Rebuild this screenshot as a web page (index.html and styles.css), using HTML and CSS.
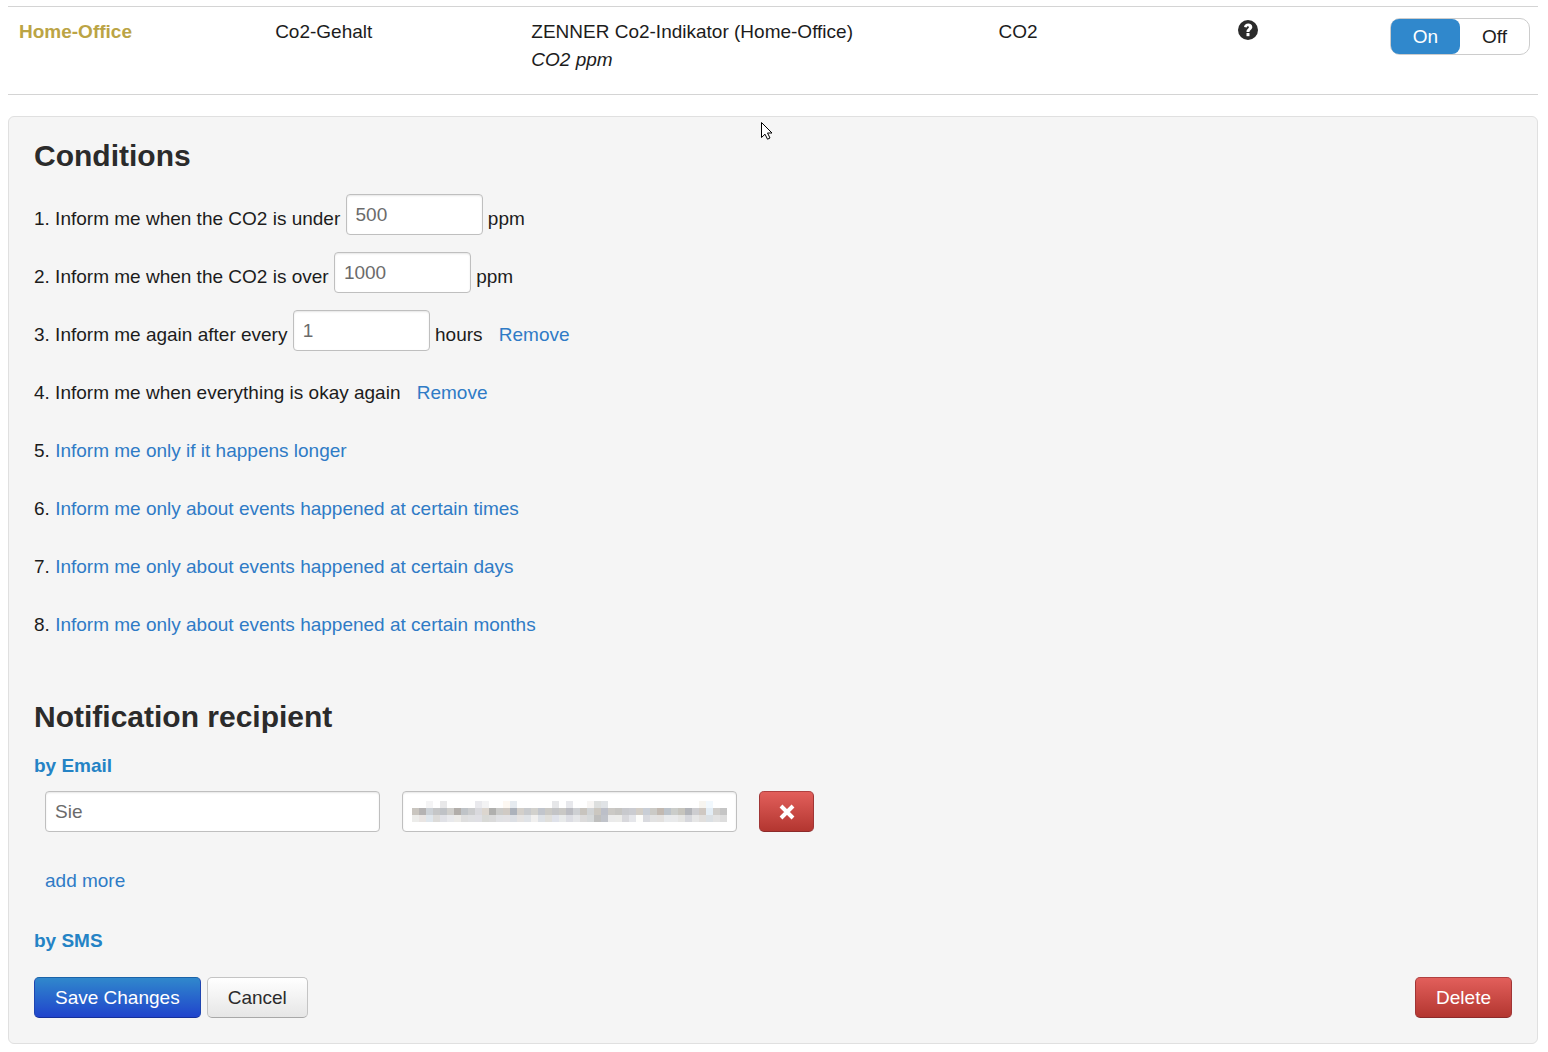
FILE: index.html
```html
<!DOCTYPE html>
<html lang="en">
<head>
    <meta charset="UTF-8">
    <meta name="viewport" content="width=device-width, initial-scale=1.0">
    <title>Notifications</title>
    <link rel="stylesheet" href="styles.css">
</head>
<body>
    <table class="sensor-table">
        <tr>
            <td class="col-group"><strong class="group-name">Home-Office</strong></td>
            <td class="col-name">Co2-Gehalt</td>
            <td class="col-device">ZENNER Co2-Indikator (Home-Office)<br><em>CO2 ppm</em></td>
            <td class="col-type">CO2</td>
            <td class="col-help">
                <svg class="help-icon" width="20" height="20" viewBox="0 0 20 20" role="img" aria-label="Help">
                    <circle cx="10" cy="10" r="10" fill="#2b2b2b"/>
                    <path d="M6 7C6.3 4.700 7.900 3.500 10.200 3.500c2.400 0 4.100 1.300 4.100 3.400 0 2.700-2.800 2.800-2.800 5H8.500c0-3.100 2.400-3.400 2.400-4.700 0-.6-.4-.9-.9-.9-.7 0-1.100.5-1.300 1.200z" fill="#fff"/>
                    <rect x="8.500" y="13" width="3" height="3.200" fill="#fff"/>
                </svg>
            </td>
            <td class="col-state">
                <div class="toggle">
                    <button type="button" class="toggle-btn active">On</button>
                    <button type="button" class="toggle-btn">Off</button>
                </div>
            </td>
        </tr>
    </table>

    <form class="well">
        <h3>Conditions</h3>
        <ul class="conditions">
            <li><label for="under">1. Inform me when the CO2 is under</label> <input type="text" id="under" class="input-small" value="500"> ppm</li>
            <li><label for="over">2. Inform me when the CO2 is over</label> <input type="text" id="over" class="input-small" value="1000"> ppm</li>
            <li><label for="again">3. Inform me again after every</label> <input type="text" id="again" class="input-small" value="1"> hours <a class="remove" href="#">Remove</a></li>
            <li>4. Inform me when everything is okay again <a class="remove" href="#">Remove</a></li>
            <li>5. <a href="#">Inform me only if it happens longer</a></li>
            <li>6. <a href="#">Inform me only about events happened at certain times</a></li>
            <li>7. <a href="#">Inform me only about events happened at certain days</a></li>
            <li>8. <a href="#">Inform me only about events happened at certain months</a></li>
        </ul>

        <h3>Notification recipient</h3>
        <h4 class="by-email">by Email</h4>
        <div class="recipient">
            <input type="text" class="input-large" value="Sie" aria-label="Name">
            <div class="masked">
                <input type="text" class="input-large" aria-label="Email">
                <svg id="mosaic" class="mosaic" width="315" height="21" shape-rendering="crispEdges" aria-hidden="true"></svg>
            </div>
            <button type="button" class="btn btn-danger btn-icon" aria-label="Remove recipient">
                <svg width="16" height="16" viewBox="0 0 16 16"><path d="M2 2l12 12M14 2L2 14" stroke="#fff" stroke-width="4"/></svg>
            </button>
        </div>
        <a class="add-more" href="#">add more</a>
        <h4>by SMS</h4>

        <div class="actions">
            <button type="button" class="btn btn-primary">Save Changes</button>
            <button type="button" class="btn">Cancel</button>
            <button type="button" class="btn btn-danger btn-delete">Delete</button>
        </div>
    </form>

    <svg class="cursor" width="14" height="20" viewBox="0 0 14 20" aria-hidden="true">
        <path d="M1.500 1.500v15l3.500-3.300 2.500 5 2.500-1.200-2.500-5h4.500z" fill="#fff" stroke="#000"/>
    </svg>

    <script src="mosaic.js"></script>
</body>
</html>
```

FILE: styles.css
```css
body {
    margin: 0;
    padding: 6px 10px 8px 8px;
    background-color: #fff;
    font-family: "Liberation Sans", Arial, sans-serif;
    font-size: 19px;
    line-height: 28px;
    color: #1c1c1c;
}

a {
    color: #2f7bc6;
    text-decoration: none;
}

input,
button {
    box-sizing: border-box;
    font-family: inherit;
    font-size: 19px;
    line-height: 28px;
}

/* Sensor row */
.sensor-table {
    width: 100%;
    table-layout: fixed;
    border-collapse: separate;
    border-spacing: 0;
    border-top: 1px solid #d4d4d4;
    border-bottom: 1px solid #d4d4d4;
    margin-bottom: 21px;
}

.sensor-table td {
    height: 66px;
    padding: 11px 8px 10px 11px;
    vertical-align: top;
}

.col-group,
.col-name {
    width: 15.5%;
}

.col-device {
    width: 29.3%;
}

.col-type {
    width: 14.4%;
}

.col-state {
    width: 140px;
}

.group-name {
    color: #bba445;
}

.help-icon {
    display: block;
    margin-top: 2px;
}

.toggle {
    display: flex;
    border: 1px solid #ccc;
    border-radius: 10px;
}

.toggle-btn {
    flex: 1;
    height: 35px;
    padding: 0;
    border: 0;
    border-radius: 8px;
    background: none;
    color: #1c1c1c;
}

.toggle-btn.active {
    background-color: #3088cc;
    color: #fff;
}

/* Conditions panel */
.well {
    padding: 20px 25px 25px;
    background-color: #f5f5f5;
    border: 1px solid #e0e0e0;
    border-radius: 6px;
}

h3 {
    margin: 0;
    font-size: 30px;
    line-height: 38px;
    color: #2b2b2b;
}

h4 {
    margin: 0;
    font-size: 19px;
    line-height: 28px;
    color: #2483c5;
}

.by-email {
    margin-top: 16px;
}

.conditions {
    margin: 18px 0 47px;
    padding: 0;
    list-style: none;
}

.conditions li {
    height: 52px;
    margin-bottom: 6px;
    line-height: 52px;
}

.remove {
    margin-left: 11px;
}

input {
    height: 41px;
    padding: 5px 9px;
    border: 1px solid #bfbfbf;
    border-radius: 4px;
    background-color: #fff;
    box-shadow: inset 0 1px 2px rgba(0, 0, 0, 0.1);
    color: #6b6b6b;
}

.input-small {
    width: 137px;
    margin-bottom: 10px;
    vertical-align: middle;
}

.recipient {
    display: flex;
    gap: 22px;
    margin: 11px 0 35px 11px;
}

.input-large {
    width: 335px;
}

.masked {
    position: relative;
}

.mosaic {
    position: absolute;
    top: 10px;
    left: 10px;
}

.add-more {
    display: block;
    margin: 0 0 32px 11px;
}

/* Buttons */
.btn {
    height: 41px;
    padding: 0 20px;
    border: 1px solid #c4c4c4;
    border-bottom-color: #a8a8a8;
    border-radius: 5px;
    background: linear-gradient(#fff, #e6e6e6);
    color: #2b2b2b;
}

.btn-primary {
    border-color: #1a63a8 #1f45b0 #15309a;
    background: linear-gradient(#3088cc, #2044cc);
    color: #fff;
}

.btn-danger {
    border-color: #b04040 #a03535 #8c2a2a;
    background: linear-gradient(#e25f5b, #b33630);
    color: #fff;
}

.btn-icon {
    width: 55px;
    padding: 0;
}

.btn-icon svg {
    display: block;
    margin: 0 auto;
}

.actions {
    display: flex;
    gap: 6px;
    margin-top: 22px;
}

.btn-delete {
    margin-left: auto;
}

.cursor {
    position: absolute;
    top: 121px;
    left: 760px;
}
```

FILE: mosaic.js
```js
// Blocks that cover the email address, one colour per cell ('-' is empty)
const CELL = 7;
const rows = [
    '- - f4f4f5 - e8e8e9 - - - - e9e9ed f3f3f4 - - fdf8f2 e6ebf0 - - - - - e6e7e9 - e7e8ec - - f7f5f3 dddfde e0e3e6 - - - - - - - - - - - - - f7f5f0 f1f8fd - -',
    'c9c5bf b5b3b3 ccd1d6 c5c6c7 bfc2c6 cfcecb b2aeaa bfc3c7 cbcccd d9d9dd dcd6cf b0b0ae cbcbc9 d0cac4 acb2bb d3cfca c8cacd d2d1cd c1c5cc cac9c5 c3c4c6 c9c8c5 bbbcc2 ced0d3 c8c4be d0d3d5 cbc7c0 bcbfc8 cbc9c5 c6c5c2 c8c9cd cbccd1 d3cec7 c9ced6 cbcac6 c2b9b1 bcc3ca cbcdca c6c4bd b2b4b9 cdcdd0 cfc8c2 e3edf5 d0cecb c5c5c5',
    'ececea e9e5e3 dfe6ec dcdbd9 e0e1e6 e8e9ec ecebe8 dedede dfe0e2 dfdfe4 d8d9d6 dadada e0e1e4 e2e1e4 dcdfe4 e5e3e2 e0e3e7 f1f0ef dde1e6 e0dfdb dfe2ea e8eaea dcdde3 e5e6e8 dcdbdb d6d9da bfbfbe c0c3ca ebebeb ececea d8d8dc e5e6ea fdfdfb d9dadf e2e2e2 e3e1df e8eaec e9eaeb e5e5e3 d6d7dc e6e6e6 e1dfdd dbe0e4 e3e3e3 dddddd'
];

const mosaic = document.getElementById('mosaic');

rows.forEach((row, y) => {
    row.split(' ').forEach((color, x) => {
        if (color === '-') return;
        const rect = document.createElementNS('http://www.w3.org/2000/svg', 'rect');
        rect.setAttribute('x', x * CELL);
        rect.setAttribute('y', y * CELL);
        rect.setAttribute('width', CELL);
        rect.setAttribute('height', CELL);
        rect.setAttribute('fill', `#${color}`);
        mosaic.appendChild(rect);
    });
});
```
